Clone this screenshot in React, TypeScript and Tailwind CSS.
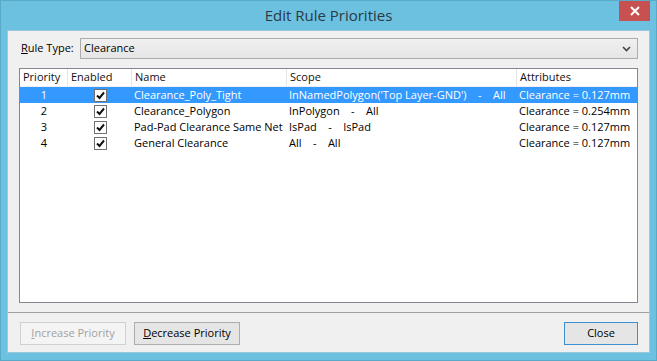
const rules = [
  { priority: 1, name: "Clearance_Poly_Tight", scope: "InNamedPolygon('Top Layer-GND')    -    All", attr: "Clearance = 0.127mm" },
  { priority: 2, name: "Clearance_Polygon", scope: "InPolygon    -    All", attr: "Clearance = 0.254mm" },
  { priority: 3, name: "Pad-Pad Clearance Same Net", scope: "IsPad    -    IsPad", attr: "Clearance = 0.127mm" },
  { priority: 4, name: "General Clearance", scope: "All    -    All", attr: "Clearance = 0.127mm" },
];

const CheckBox = () => (
  <span className="flex h-[13px] w-[13px] items-center justify-center border border-[#707070] bg-white">
    <svg width="9" height="9" viewBox="0 0 9 9">
      <path d="M1 4.5 L3.5 7 L8 1.5" fill="none" stroke="#111" strokeWidth="2" />
    </svg>
  </span>
);

export default function App() {
  return (
    <div
      className="relative flex h-[361px] w-[657px] flex-col border border-[#5aa9c9] bg-[#6cc1e0] text-[11px] text-black"
      style={{ fontFamily: '"Open Sans", "Noto Sans", sans-serif' }}
    >
      {/* title bar */}
      <div className="flex h-[29px] items-center justify-center text-[15px] text-[#2a3a44]">Edit Rule Priorities</div>
      <button className="absolute right-[6px] top-0 flex h-[20px] w-[31px] items-center justify-center bg-[#c75050]">
        <svg width="10" height="10" viewBox="0 0 10 10">
          <path d="M1 1 L9 9 M9 1 L1 9" stroke="white" strokeWidth="2" />
        </svg>
      </button>

      {/* client */}
      <div className="mx-[6px] mb-[7px] flex flex-1 flex-col border border-[#9bc9dc] bg-[#f0f0f0]">
        <div className="flex flex-1 flex-col pl-[11px] pr-[11px] pt-[7px]">
          <div className="flex items-center">
            <span className="w-[61px] pl-[2px]">
              <u>R</u>ule Type:
            </span>
            <div className="flex h-[21px] flex-1 items-center justify-between border border-[#acacac] bg-gradient-to-b from-[#f0f0f0] to-[#e5e5e5] pl-[3px] pr-[6px]">
              <span>Clearance</span>
              <svg width="9" height="6" viewBox="0 0 9 6">
                <path d="M1 1 L4.5 4.5 L8 1" fill="none" stroke="#444" strokeWidth="1.6" />
              </svg>
            </div>
          </div>

          <div className="mt-[9px] h-[235px] border border-[#828790] bg-white">
            <div className="flex h-[18px] items-center border-b border-[#f0f0f0] text-[#111]">
              <div className="w-[48px] border-r border-[#e5e5e5] pl-[3px]">Priority</div>
              <div className="w-[64px] border-r border-[#e5e5e5] pl-[3px]">Enabled</div>
              <div className="w-[155px] border-r border-[#e5e5e5] pl-[3px]">Name</div>
              <div className="w-[230px] border-r border-[#e5e5e5] pl-[3px]">Scope</div>
              <div className="flex-1 pl-[3px]">Attributes</div>
            </div>
            {rules.map((r, i) => (
              <div
                key={r.priority}
                className={`flex h-[16px] items-center ${i === 0 ? "bg-[#3399ff] text-white" : ""}`}
              >
                <div className="w-[48px] text-center">{r.priority}</div>
                <div className="flex w-[64px] justify-center">
                  <CheckBox />
                </div>
                <div className="w-[155px] whitespace-nowrap pl-[2px]">{r.name}</div>
                <div className="w-[230px] whitespace-pre pl-[2px]">{r.scope}</div>
                <div className="flex-1 whitespace-nowrap pl-[2px]">{r.attr}</div>
              </div>
            ))}
          </div>
        </div>

        <div className="flex items-center border-t border-[#a0a0a0] pl-[12px] pr-[11px] pb-[7px] pt-[9px]">
          <button className="flex h-[23px] w-[106px] items-center justify-center border border-[#d0d0d0] bg-[#f4f4f4] text-[#a0a0a0]">
            <span>
              <u>I</u>ncrease Priority
            </span>
          </button>
          <button className="ml-[8px] flex h-[23px] w-[106px] items-center justify-center border border-[#adadad] bg-[#e5e5e5]">
            <span>
              <u>D</u>ecrease Priority
            </span>
          </button>
          <button className="ml-auto flex h-[23px] w-[74px] items-center justify-center border border-[#3c8fd0] bg-[#e5e5e5]">
            Close
          </button>
        </div>
      </div>
    </div>
  );
}
